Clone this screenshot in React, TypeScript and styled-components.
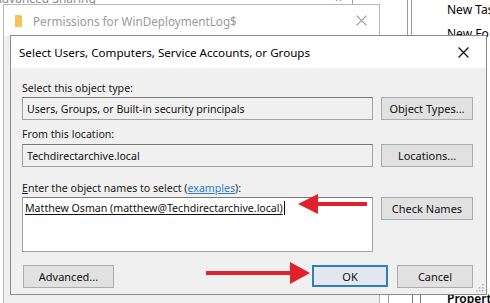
import React from "react";
import styled, { createGlobalStyle } from "styled-components";

const Global = createGlobalStyle`
  html, body { margin: 0; padding: 0; background: #ffffff; }
  body { font-family: "Segoe UI", "Noto Sans", "Liberation Sans", sans-serif; }
  * { box-sizing: border-box; }
`;

const Desktop = styled.div`
  position: relative;
  width: 490px;
  height: 303px;
  overflow: hidden;
  background: #ffffff;
`;

const BgText = styled.div<{ $x: number; $y: number; $bold?: boolean; $color?: string }>`
  position: absolute;
  left: ${(p) => p.$x}px;
  top: ${(p) => p.$y}px;
  font-family: "Noto Sans", "Liberation Sans", sans-serif;
  font-size: 12px;
  line-height: 16px;
  color: ${(p) => p.$color || "#000"};
  font-weight: ${(p) => (p.$bold ? 600 : 400)};
  white-space: nowrap;
`;

const VLine = styled.div<{ $x: number; $y: number; $h: number; $c?: string }>`
  position: absolute;
  left: ${(p) => p.$x}px;
  top: ${(p) => p.$y}px;
  width: 1px;
  height: ${(p) => p.$h}px;
  background: ${(p) => p.$c || "#a0a0a0"};
`;

const BackWindow = styled.div`
  position: absolute;
  left: 3px;
  top: 4px;
  width: 377px;
  height: 310px;
  background: #f0f0f0;
  border: 1px solid #b9b9b9;
  display: flex;
  flex-direction: column;
`;

const BackTitle = styled.div`
  height: 31px;
  background: #ffffff;
  display: flex;
  align-items: center;
  padding-left: 10px;
  gap: 9px;
  font-family: "Noto Sans", "Liberation Sans", sans-serif;
  font-size: 11.7px;
  color: #9a9a9a;
`;

const BackClose = styled.span`
  margin-left: auto;
  width: 36px;
  display: flex;
  justify-content: center;
`;

const Dialog = styled.div`
  position: absolute;
  left: 10px;
  top: 35px;
  width: 477px;
  height: 260px;
  background: #f0f0f0;
  border: 1px solid #8c8c8c;
  display: flex;
  flex-direction: column;
  font-family: "Noto Sans", "Liberation Sans", sans-serif;
  font-size: 10.6px;
  color: #000;
`;

const TitleBar = styled.div`
  height: 32px;
  background: #ffffff;
  display: flex;
  align-items: center;
  padding-left: 8px;
  font-size: 11.6px;
  color: #000;
  flex-shrink: 0;
`;

const CloseBox = styled.span`
  margin-left: auto;
  width: 46px;
  height: 32px;
  display: flex;
  align-items: center;
  justify-content: center;
`;

const Body = styled.div`
  flex: 1;
  position: relative;
  padding: 0 13px 0 11px;
  display: flex;
  flex-direction: column;
`;

const Label = styled.div<{ $mt: number }>`
  margin-top: ${(p) => p.$mt}px;
  height: 16px;
  line-height: 16px;
  white-space: nowrap;
  color: #1a1a1a;
`;

const Row = styled.div<{ $mt: number }>`
  margin-top: ${(p) => p.$mt}px;
  display: flex;
  gap: 8px;
  align-items: flex-start;
`;

const Field = styled.div<{ $h: number; $white?: boolean }>`
  flex: 1;
  height: ${(p) => p.$h}px;
  background: ${(p) => (p.$white ? "#ffffff" : "#f0f0f0")};
  border: 1px solid #a3a3a3;
  border-top-color: #7a7a7a;
  padding: ${(p) => (p.$white ? "2px 2px" : "3px 4px")};
  line-height: 16px;
  white-space: nowrap;
  overflow: hidden;
  color: #111;
`;

const Entered = styled.span`
  text-decoration: underline;
  text-underline-offset: 2px;
  border-right: 1px solid #000;
  padding-right: 1px;
`;

const Btn = styled.div<{ $w: number; $focus?: boolean }>`
  width: ${(p) => p.$w}px;
  height: ${(p) => (p.$focus ? 22 : 23)}px;
  flex-shrink: 0;
  background: ${(p) => (p.$focus ? "#e3e8ee" : "#e1e1e1")};
  border: ${(p) => (p.$focus ? "2px solid #2d7fbf" : "1px solid #adadad")};
  display: flex;
  align-items: center;
  justify-content: center;
  color: #111;
  font-size: 11px;
  white-space: nowrap;
`;

const Link = styled.span`
  color: #2a7ad0;
  text-decoration: underline;
`;

const U = styled.span`
  text-decoration: underline;
`;

const Footer = styled.div`
  margin-top: 13px;
  display: flex;
  align-items: center;
  padding-left: 1px;
`;

const FooterRight = styled.div`
  margin-left: auto;
  display: flex;
  gap: 9px;
`;

const Overlay = styled.svg`
  position: absolute;
  left: 0;
  top: 0;
  pointer-events: none;
`;

const Grip = styled.svg`
  position: absolute;
  right: 2px;
  bottom: 2px;
`;

const XIcon = ({ size, color, sw }: { size: number; color: string; sw: number }) => (
  <svg width={size} height={size} viewBox="0 0 10 10">
    <path d="M0.5 0.5 L9.5 9.5 M9.5 0.5 L0.5 9.5" stroke={color} strokeWidth={sw} fill="none" />
  </svg>
);

export default function App() {
  return (
    <Desktop>
      <Global />
      {/* background windows */}
      <BgText $x={-6} $y={-9} $color="#8a8a8a">Advanced Sharing</BgText>
      <BgText $x={335} $y={-9} $color="#8a8a8a">×</BgText>
      <VLine $x={352} $y={0} $h={5} />
      <VLine $x={407} $y={0} $h={40} $c="#9a9a9a" />
      <VLine $x={411} $y={0} $h={40} $c="#9a9a9a" />
      <BgText $x={447} $y={2}>New Tas</BgText>
      <BgText $x={447} $y={26}>New Fo</BgText>
      <VLine $x={23} $y={293} $h={10} $c="#555" />
      <VLine $x={64} $y={293} $h={10} $c="#999" />
      <VLine $x={357} $y={293} $h={10} $c="#555" />
      <VLine $x={388} $y={293} $h={10} $c="#999" />
      <VLine $x={412} $y={293} $h={10} $c="#777" />
      <VLine $x={420} $y={293} $h={10} $c="#777" />
      <BgText $x={447} $y={291} $bold>Properti</BgText>

      <BackWindow>
        <BackTitle>
          <svg width="10" height="14" viewBox="0 0 10 14">
            <path d="M1 1 H6 L8 3 V13 H1 Z" fill="#f4c45a" />
            <path d="M6 1 L8 3 H6 Z" fill="#e0a93a" />
          </svg>
          <span>Permissions for WinDeploymentLog$</span>
          <BackClose>
            <XIcon size={11} color="#9a9a9a" sw={1} />
          </BackClose>
        </BackTitle>
      </BackWindow>

      <Dialog>
        <TitleBar>
          <span>Select Users, Computers, Service Accounts, or Groups</span>
          <CloseBox>
            <XIcon size={11} color="#111" sw={1.1} />
          </CloseBox>
        </TitleBar>
        <Body>
          <Label $mt={12}>Select this object type:</Label>
          <Row $mt={1}>
            <Field $h={23}>Users, Groups, or Built-in security principals</Field>
            <Btn $w={92}>Object Types...</Btn>
          </Row>
          <Label $mt={6}>From this location:</Label>
          <Row $mt={2}>
            <Field $h={23}>Techdirectarchive.local</Field>
            <Btn $w={92}>Locations...</Btn>
          </Row>
          <Label $mt={13}>
            <U>E</U>nter the object names to select (<Link>examples</Link>):
          </Label>
          <Row $mt={1}>
            <Field $h={55} $white>
              <Entered>Matthew Osman (matthew@Techdirectarchive.local)</Entered>
            </Field>
            <Btn $w={92}>Check Names</Btn>
          </Row>
          <Footer>
            <Btn $w={91}>Advanced...</Btn>
            <FooterRight>
              <Btn $w={76} $focus>OK</Btn>
              <Btn $w={76}>Cancel</Btn>
            </FooterRight>
          </Footer>
          <Grip width="8" height="8" viewBox="0 0 8 8">
            <rect x="6" y="0" width="1.5" height="1.5" fill="#b0b0b0" />
            <rect x="3" y="3" width="1.5" height="1.5" fill="#b0b0b0" />
            <rect x="6" y="3" width="1.5" height="1.5" fill="#b0b0b0" />
            <rect x="0" y="6" width="1.5" height="1.5" fill="#b0b0b0" />
            <rect x="3" y="6" width="1.5" height="1.5" fill="#b0b0b0" />
            <rect x="6" y="6" width="1.5" height="1.5" fill="#b0b0b0" />
          </Grip>
        </Body>
      </Dialog>

      <Overlay width="490" height="303" viewBox="0 0 490 303">
        <line x1="367" y1="204" x2="315" y2="204" stroke="#e0202a" strokeWidth="4" />
        <polygon points="298,204 318,194 318,214" fill="#e0202a" />
        <line x1="206" y1="273" x2="292" y2="273" stroke="#e0202a" strokeWidth="4" />
        <polygon points="310,273 290,262 290,284" fill="#e0202a" />
      </Overlay>
    </Desktop>
  );
}
